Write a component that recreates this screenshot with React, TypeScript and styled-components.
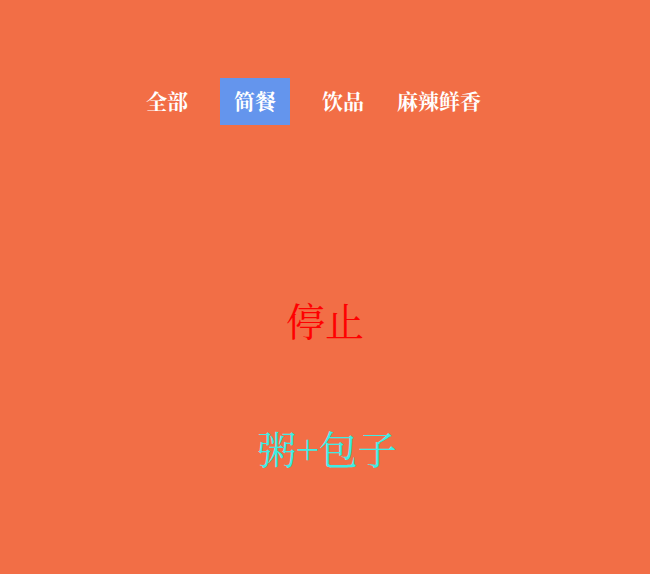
import React from "react";
import styled, { createGlobalStyle } from "styled-components";

const Global = createGlobalStyle`
  html, body { margin: 0; padding: 0; }
  body {
    background: #f26e46;
    font-family: "Noto Serif CJK SC", "Liberation Serif", serif;
    width: 650px;
    height: 574px;
    overflow: hidden;
  }
`;

const Page = styled.div`
  display: flex;
  flex-direction: column;
  align-items: center;
  height: 574px;
`;

const TabBar = styled.ul`
  display: flex;
  list-style: none;
  margin: 78px 0 0 0;
  padding: 0 36px 0 0;
`;

const Tab = styled.li<{ $active?: boolean; $pad: number }>`
  height: 47px;
  box-sizing: border-box;
  display: flex;
  align-items: center;
  padding: 0 ${(p) => p.$pad}px 3px;
  margin: 0 9px;
  background: ${(p) => (p.$active ? "#6495ed" : "transparent")};
  color: #fff;
  font-size: 21px;
  font-weight: bold;
  line-height: 1;
`;

const Status = styled.div<{ $color: string; $top: number; $dx: number }>`
  margin-top: ${(p) => p.$top}px;
  margin-left: ${(p) => p.$dx}px;
  color: ${(p) => p.$color};
  font-size: 39px;
  line-height: 1;
  height: 40px;
`;

const tabs = [
  { label: "全部", pad: 14 },
  { label: "简餐", pad: 14, active: true },
  { label: "饮品", pad: 14 },
  { label: "麻辣鲜香", pad: 1 },
];

export default function App() {
  return (
    <Page>
      <Global />
      <TabBar>
        {tabs.map((t) => (
          <Tab key={t.label} $active={t.active} $pad={t.pad}>
            {t.label}
          </Tab>
        ))}
      </TabBar>
      <Status $color="#ff0000" $top={175} $dx={0}>停止</Status>
      <Status $color="#40ece4" $top={88} $dx={4}>粥+包子</Status>
    </Page>
  );
}
